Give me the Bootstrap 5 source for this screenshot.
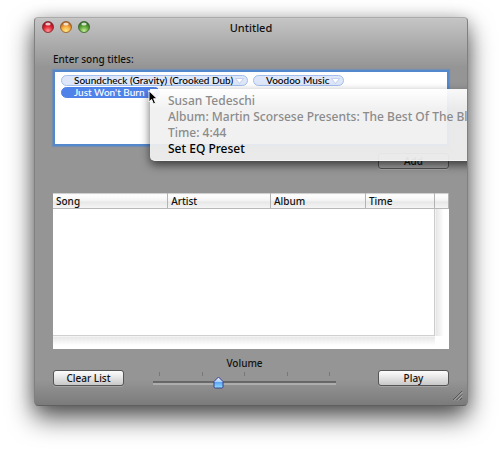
<!DOCTYPE html>
<html lang="en">
<head>
<meta charset="utf-8">
<meta name="viewport" content="width=device-width, initial-scale=1">
<title>Untitled</title>
<link href="https://cdn.jsdelivr.net/npm/bootstrap@5.3.0/dist/css/bootstrap.min.css" rel="stylesheet">
<style>
  body { font-family: "Noto Sans", "Open Sans", sans-serif; font-size: 10px; line-height: 12px; font-weight: 500; color: #111; background: #fff; padding: 17px 35px 47px 34px; overflow: hidden; }
  .song-window { border-radius: 4px; border: 1px solid #808080; border-top-color: #aaa; border-bottom-color: #606060; background: linear-gradient(to bottom, #d0d0d0 0, #c4c4c4 2px, #959595 50px, #959595 calc(100% - 26px), #7a7a7a 100%); background-origin: border-box; box-shadow: 0 12px 26px rgba(0,0,0,.65), 0 2px 16px rgba(0,0,0,.2); }
  .title-bar { height: 20px; }
  .window-title { font-size: 11px; line-height: 16px; font-weight: 500; }
  .lights { left: 7px; top: 3px; gap: 6px; }
  .light { width: 12px; height: 12px; border: 0; background: none; }
  .light svg { display: block; }
  .content { padding: 15px 18px; }
  .field { height: 76px; margin-top: 5px; padding: 3px 6px; background: #fff; border: 2px solid #5488cc; box-shadow: 0 0 1px 1px rgba(84,136,204,.5); }
  .token-list { gap: 1px 5px; }
  .token { font-family: Lato, "Open Sans", sans-serif; height: 11px; line-height: 9px; border: 1px solid #a3bff0; border-radius: 6px; background: #dde7f9; color: #000; padding: 0 3px 0 12px; gap: 2px; font-size: 10px; font-weight: 500; }
  .token.selected { background: #5083ea; border-color: #5083ea; color: #fff; }
  .info-menu { left: 95px; top: 17px; width: 420px; padding: 4px 18px 3px; border-radius: 0 0 5px 5px; background: linear-gradient(to bottom, rgba(255,255,255,.94), rgba(240,240,240,.93) 20px, rgba(240,240,240,.93)); box-shadow: 0 4px 10px rgba(0,0,0,.6); border-bottom: 1px solid #f4f4f4; z-index: 3; }
  .info-menu li, .info-menu button { font-size: 12px; line-height: 16px; color: #8b8b8b; white-space: nowrap; }
  .info-menu button { color: #000; border: 0; background: none; padding: 0; font-weight: 500; display: block; }
  .pointer { left: 93px; top: 18px; z-index: 4; }
  .mac-btn { width: 71px; height: 16px; font-size: 10px; line-height: 14px; font-weight: 500; color: #111; border: 1px solid #555; border-radius: 3px; padding: 0; background: linear-gradient(to bottom, #fdfdfd, #e4e4e4 50%, #c8c8c8); box-shadow: 0 1px 0 rgba(255,255,255,.2); }
  .mac-btn.dim { background: #a2a2a2; }
  .add-row { margin-top: 7px; }
  .songs { margin-top: 24px; background: #fff; table-layout: fixed; }
  .songs th { height: 15px; padding: 0 3px; line-height: 13px; font-weight: 500; border-right: 1px solid #b4b4b4; border-top: 1px solid #d0d0d0; border-bottom: 1px solid #b8b8b8; background: linear-gradient(to bottom, #fff, #f4f4f4 45%, #e6e6e6 50%, #f6f6f6); }
  .songs td { padding: 0; }
  .songs .rows { height: 127px; }
  .songs .v-track { border-left: 1px solid #ccc; background: linear-gradient(to right, #e4e4e4, #fff 60%); }
  .songs .h-track { height: 13px; border-top: 1px solid #d0d0d0; background: linear-gradient(to bottom, #e6e6e6, #fff 70%); }
  .col-song { width: 29%; }
  .col-artist { width: 26%; }
  .col-album { width: 24%; }
  .col-scroll { width: 14px; }
  .controls { margin-top: 8px; }
  .controls .mac-btn { margin-bottom: 4px; }
  .volume { margin: 0 42px 0 29px; }
  .ticks { height: 4px; margin: 3px 6px 0; }
  .ticks span { width: 1px; background: #777; }
  .volume input { appearance: none; -webkit-appearance: none; display: block; width: 100%; height: 14px; margin: 0; background: linear-gradient(to bottom, transparent 5px, #646464 5px, #6b6b6b 7px, #aaa 7px, #b0b0b0 9px, transparent 9px); }
  .volume input::-webkit-slider-thumb { -webkit-appearance: none; width: 11px; height: 13px; border: 0; background: url("data:image/svg+xml,%3Csvg xmlns='http://www.w3.org/2000/svg' width='11' height='13'%3E%3Cdefs%3E%3ClinearGradient id='g' x2='0' y2='1'%3E%3Cstop stop-color='%23f0f5ff'/%3E%3Cstop offset='.45' stop-color='%23a9cdf8'/%3E%3Cstop offset='.5' stop-color='%235ea5f2'/%3E%3Cstop offset='1' stop-color='%2390e0ff'/%3E%3C/linearGradient%3E%3C/defs%3E%3Cpath d='M5.5 1 10 5.5v5.2q0 1.3-1.3 1.3H2.3Q1 12 1 10.700V5.500z' fill='url(%23g)' stroke='%23383f8c'/%3E%3C/svg%3E") no-repeat; }
  .grip { right: 4px; bottom: 4px; }
</style>
</head>
<body class="min-vh-100">
<main class="song-window position-relative overflow-hidden">
  <header class="title-bar position-relative d-flex align-items-center justify-content-center">
    <div class="lights position-absolute d-flex">
      <button class="light p-0" type="button" aria-label="Close"><svg width="12" height="12" viewBox="0 0 12 12"><defs><radialGradient id="red" cx=".5" cy=".85" r=".8"><stop stop-color="#ff9a9a"/><stop offset=".5" stop-color="#e32b38"/><stop offset="1" stop-color="#8c101c"/></radialGradient></defs><circle cx="6" cy="6" r="5.500" fill="url(#red)" stroke="#7d2228" stroke-width=".8"/><ellipse cx="6" cy="3" rx="2.700" ry="1.600" fill="#fff" opacity=".75"/></svg></button>
      <button class="light p-0" type="button" aria-label="Minimize"><svg width="12" height="12" viewBox="0 0 12 12"><defs><radialGradient id="amber" cx=".5" cy=".85" r=".8"><stop stop-color="#ffeb8a"/><stop offset=".5" stop-color="#f8ae42"/><stop offset="1" stop-color="#a3561a"/></radialGradient></defs><circle cx="6" cy="6" r="5.500" fill="url(#amber)" stroke="#8e5526" stroke-width=".8"/><ellipse cx="6" cy="3" rx="2.700" ry="1.600" fill="#fff" opacity=".75"/></svg></button>
      <button class="light p-0" type="button" aria-label="Zoom"><svg width="12" height="12" viewBox="0 0 12 12"><defs><radialGradient id="green" cx=".5" cy=".85" r=".8"><stop stop-color="#c8f09a"/><stop offset=".5" stop-color="#63a83c"/><stop offset="1" stop-color="#28601c"/></radialGradient></defs><circle cx="6" cy="6" r="5.500" fill="url(#green)" stroke="#35602a" stroke-width=".8"/><ellipse cx="6" cy="3" rx="2.700" ry="1.600" fill="#fff" opacity=".75"/></svg></button>
    </div>
    <h1 class="window-title m-0">Untitled</h1>
  </header>

  <div class="content">
    <div id="titles-label">Enter song titles:</div>
    <div class="field position-relative" role="group" aria-labelledby="titles-label">
      <div class="token-list d-flex flex-wrap">
        <button class="token d-flex align-items-center" type="button">Soundcheck (Gravity) (Crooked Dub)<svg class="flex-shrink-0" width="9" height="6" viewBox="0 0 9 6"><path d="M.5.5h8L4.500 5.500z" fill="#fff" stroke="#b8c8e8" stroke-width=".8"/></svg></button>
        <button class="token d-flex align-items-center" type="button">Voodoo Music<svg class="flex-shrink-0" width="9" height="6" viewBox="0 0 9 6"><path d="M.5.5h8L4.500 5.500z" fill="#fff" stroke="#b8c8e8" stroke-width=".8"/></svg></button>
        <button class="token selected d-flex align-items-center" type="button">Just Won't Burn<svg class="flex-shrink-0" width="9" height="6" viewBox="0 0 9 6"><path d="M.5.5h8L4.500 5.500z" fill="#fff"/></svg></button>
      </div>
      <ul class="info-menu position-absolute list-unstyled m-0">
        <li>Susan Tedeschi</li>
        <li>Album: Martin Scorsese Presents: The Best Of The Bl</li>
        <li>Time: 4:44</li>
        <li><button type="button">Set EQ Preset</button></li>
      </ul>
      <svg class="pointer position-absolute" width="10" height="15" viewBox="0 0 10 15"><path d="M1 .8v11l2.600-2.400 1.900 4.500 2-.9-1.900-4.300h3.500z" fill="#000" stroke="#fff" stroke-width=".9"/></svg>
    </div>
    <div class="add-row d-flex justify-content-end"><button class="mac-btn dim" type="button">Add</button></div>

    <table class="songs w-100">
      <colgroup><col class="col-song"><col class="col-artist"><col class="col-album"><col><col class="col-scroll"></colgroup>
      <thead><tr><th scope="col">Song</th><th scope="col">Artist</th><th scope="col">Album</th><th scope="col">Time</th><th></th></tr></thead>
      <tbody>
        <tr><td class="rows" colspan="4"></td><td class="v-track"></td></tr>
        <tr><td class="h-track" colspan="4"></td><td></td></tr>
      </tbody>
    </table>

    <div class="controls d-flex align-items-end">
      <button class="mac-btn" type="button">Clear List</button>
      <div class="volume flex-grow-1">
        <label class="d-block text-center" for="volume">Volume</label>
        <div class="ticks d-flex justify-content-between"><span></span><span></span><span></span><span></span><span></span></div>
        <input id="volume" type="range" min="0" max="100" value="35">
      </div>
      <button class="mac-btn" type="button">Play</button>
    </div>
  </div>
  <svg class="grip position-absolute" width="12" height="12" viewBox="0 0 12 12"><path d="M2 11 11 2M5.500 11 11 5.500M9 11l2-2" stroke="#555" fill="none"/><path d="M3 11.500 11.500 3M6.500 11.500l5-5" stroke="#bbb" stroke-width=".7" fill="none"/></svg>
</main>
<script src="https://cdn.jsdelivr.net/npm/bootstrap@5.3.0/dist/js/bootstrap.bundle.min.js"></script>
</body>
</html>
